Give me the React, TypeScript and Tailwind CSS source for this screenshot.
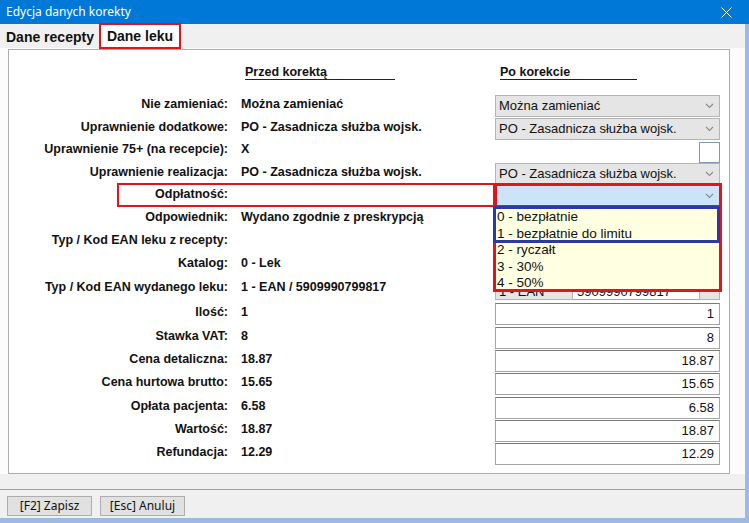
import React from 'react'

const ui = "font-['Noto_Sans','Liberation_Sans',sans-serif]"
const tah = "font-['Liberation_Sans',Arial,sans-serif]"

function Chevron() {
  return (
    <svg width="9" height="6" viewBox="0 0 9 6" className="shrink-0">
      <polyline points="1,1 4.5,4.5 8,1" fill="none" stroke="#8a8a8a" strokeWidth="1.1" />
    </svg>
  )
}

function Select({ value, active }: { value: string; active?: boolean }) {
  return (
    <div
      className={
        active
          ? 'h-[22px] flex items-center justify-between border border-[#7eb4ea] bg-[#cce4f7] pl-[3px] pr-[5px]'
          : 'h-[22px] flex items-center justify-between border border-[#b4b4b4] bg-[#e5e5e5] pl-[3px] pr-[5px]'
      }
    >
      <span className="text-[13px] text-[#111] whitespace-nowrap">{value}</span>
      <Chevron />
    </div>
  )
}

function NumInput({ value }: { value: string }) {
  return (
    <div className="h-[22px] flex items-center justify-end border border-[#a5a5a5] border-t-[#7a7a7a] bg-white pr-[5px] text-[13px] text-[#111]">
      {value}
    </div>
  )
}

function EanField({ typ, ean }: { typ: string; ean: string }) {
  return (
    <div className="h-[22px] flex">
      <div className="w-[78px] flex items-end border border-[#b4b4b4] bg-[#e5e5e5] pl-[3px] text-[13px] leading-[14px] text-[#111]">{typ}</div>
      <div className="flex-1 flex items-end border-y border-[#a5a5a5] bg-white pl-[4px] text-[13px] leading-[14px] text-[#111]">{ean}</div>
      <div className="w-[21px] border border-[#b4b4b4] bg-[#e5e5e5]" />
    </div>
  )
}

type Row = { label: string; value: string; h: string; ctrl: React.ReactNode }

const rows: Row[] = [
  { label: 'Nie zamieniać:', value: 'Można zamieniać', h: 'h-[23px]', ctrl: <Select value="Można zamieniać" /> },
  { label: 'Uprawnienie dodatkowe:', value: 'PO - Zasadnicza służba wojsk.', h: 'h-[22px]', ctrl: <Select value="PO - Zasadnicza służba wojsk." /> },
  {
    label: 'Uprawnienie 75+ (na recepcie):',
    value: 'X',
    h: 'h-[23px]',
    ctrl: (
      <div className="flex justify-end pt-[2px]">
        <div className="w-[21px] h-[21px] border border-[#8397b3] bg-white" />
      </div>
    ),
  },
  { label: 'Uprawnienie realizacja:', value: 'PO - Zasadnicza służba wojsk.', h: 'h-[22px]', ctrl: <Select value="PO - Zasadnicza służba wojsk." /> },
  { label: 'Odpłatność:', value: '', h: 'h-[23px]', ctrl: <Select value="" active /> },
  { label: 'Odpowiednik:', value: 'Wydano zgodnie z preskrypcją', h: 'h-[23px]', ctrl: <Select value="" /> },
  { label: 'Typ / Kod EAN leku z recepty:', value: '', h: 'h-[23px]', ctrl: <EanField typ="" ean="" /> },
  { label: 'Katalog:', value: '0 - Lek', h: 'h-[24px]', ctrl: <Select value="" /> },
  { label: 'Typ / Kod EAN wydanego leku:', value: '1 - EAN / 5909990799817', h: 'h-[25px]', ctrl: <EanField typ="1 - EAN" ean="5909990799817" /> },
  { label: 'Ilość:', value: '1', h: 'h-[24px]', ctrl: <NumInput value="1" /> },
  { label: 'Stawka VAT:', value: '8', h: 'h-[23px]', ctrl: <NumInput value="8" /> },
  { label: 'Cena detaliczna:', value: '18.87', h: 'h-[23px]', ctrl: <NumInput value="18.87" /> },
  { label: 'Cena hurtowa brutto:', value: '15.65', h: 'h-[24px]', ctrl: <NumInput value="15.65" /> },
  { label: 'Opłata pacjenta:', value: '6.58', h: 'h-[23px]', ctrl: <NumInput value="6.58" /> },
  { label: 'Wartość:', value: '18.87', h: 'h-[23px]', ctrl: <NumInput value="18.87" /> },
  { label: 'Refundacja:', value: '12.29', h: 'h-[23px]', ctrl: <NumInput value="12.29" /> },
]

const options = ['0 - bezpłatnie', '1 - bezpłatnie do limitu', '2 - ryczałt', '3 - 30%', '4 - 50%']

export default function App() {
  return (
    <div className="w-[749px] h-[523px] flex flex-col bg-[#f0f0f0] overflow-hidden">
      {/* title bar */}
      <div className="h-[24px] shrink-0 bg-[#0078d7] flex items-center justify-between pl-[6px] pr-[17px]">
        <span className={`${ui} text-[12px] text-white`}>Edycja danych korekty</span>
        <svg width="11" height="11" viewBox="0 0 11 11">
          <path d="M0.5 0.5L10.5 10.5M10.5 0.5L0.5 10.5" stroke="white" strokeWidth="1" />
        </svg>
      </div>

      <div className="flex flex-1">
        <div className="w-[745px] flex flex-col">
          {/* tabs */}
          <div className={`${tah} h-[24px] flex items-end bg-[#f0f0f0]`}>
            <div className="w-[99px] h-[22px] pl-[6px] flex items-center text-[14px] font-bold text-[#111] whitespace-nowrap">
              Dane recepty
            </div>
            <div className="relative -mb-[1px] w-[82px] h-[26px] border-2 border-[#e3131b] bg-white flex items-center justify-center text-[14px] font-bold text-[#111] whitespace-nowrap">
              Dane leku
            </div>
          </div>

          {/* tab page */}
          <div className="h-[426px] bg-[#fcfcfc] pt-[1px] pl-[8px]">
            <div className={`${tah} relative w-[722px] h-[425px] border border-[#adadad] bg-white text-[#111]`}>
              <div className="grid grid-cols-[219px_267px_225px] mt-[15px] h-[14px] leading-[14px] text-[12.5px] font-bold">
                <div />
                <div className="pl-[17px]">
                  <span className="inline-block w-[150px] border-b border-[#222]">Przed korektą</span>
                </div>
                <div className="pl-[5px]">
                  <span className="inline-block w-[137px] border-b border-[#222]">Po korekcie</span>
                </div>
              </div>

              <div className="mt-[16px] flex flex-col">
                {rows.map((r) => (
                  <div key={r.label} className={`grid grid-cols-[219px_267px_225px] ${r.h}`}>
                    <div className="pt-[2px] text-right text-[12.5px] leading-[15px] font-bold whitespace-nowrap">{r.label}</div>
                    <div className="pt-[2px] pl-[13px] text-[12.5px] leading-[15px] font-bold whitespace-nowrap">{r.value}</div>
                    <div>{r.ctrl}</div>
                  </div>
                ))}
              </div>

              {/* open dropdown list */}
              <div className="absolute left-[486px] top-[157px] w-[225px] h-[84px] bg-[#ffffe1] pt-[2px] pl-[2px]">
                {options.map((o) => (
                  <div key={o} className="h-[16.5px] leading-[16.5px] text-[13.5px] text-[#111] whitespace-nowrap">
                    {o}
                  </div>
                ))}
              </div>

              {/* annotation boxes */}
              <div className="absolute left-[108px] top-[133px] w-[380px] h-[24px] border-2 border-[#e3131b]" />
              <div className="absolute left-[484px] top-[133px] w-[229px] h-[25px] border-[3px] border-[#e3131b]" />
              <div className="absolute left-[484px] top-[156px] w-[229px] h-[86px] border-[3px] border-[#e3131b]" />
              <div className="absolute left-[484px] top-[156px] w-[227px] h-[37px] border-[3px] border-[#2e3aa0]" />
            </div>
          </div>

          {/* footer */}
          <div className="h-[44px] bg-[#f0f0f0] pt-[15px]">
            <div className="border-t border-[#a0a0a0]" />
            <div className={`${ui} flex gap-[8px] pl-[7px] pt-[6px]`}>
              <div className="w-[85px] h-[20px] border border-[#adadad] bg-[#e1e1e1] flex items-center justify-center text-[12px] text-[#111]">
                [F2] Zapisz
              </div>
              <div className="w-[85px] h-[20px] border border-[#adadad] bg-[#e1e1e1] flex items-center justify-center text-[12px] text-[#111]">
                [Esc] Anuluj
              </div>
            </div>
          </div>
        </div>
        <div className="w-[4px] bg-[#9dbbe0]" />
      </div>
      <div className="h-[5px] shrink-0 bg-[#9dbbe0]" />
    </div>
  )
}
